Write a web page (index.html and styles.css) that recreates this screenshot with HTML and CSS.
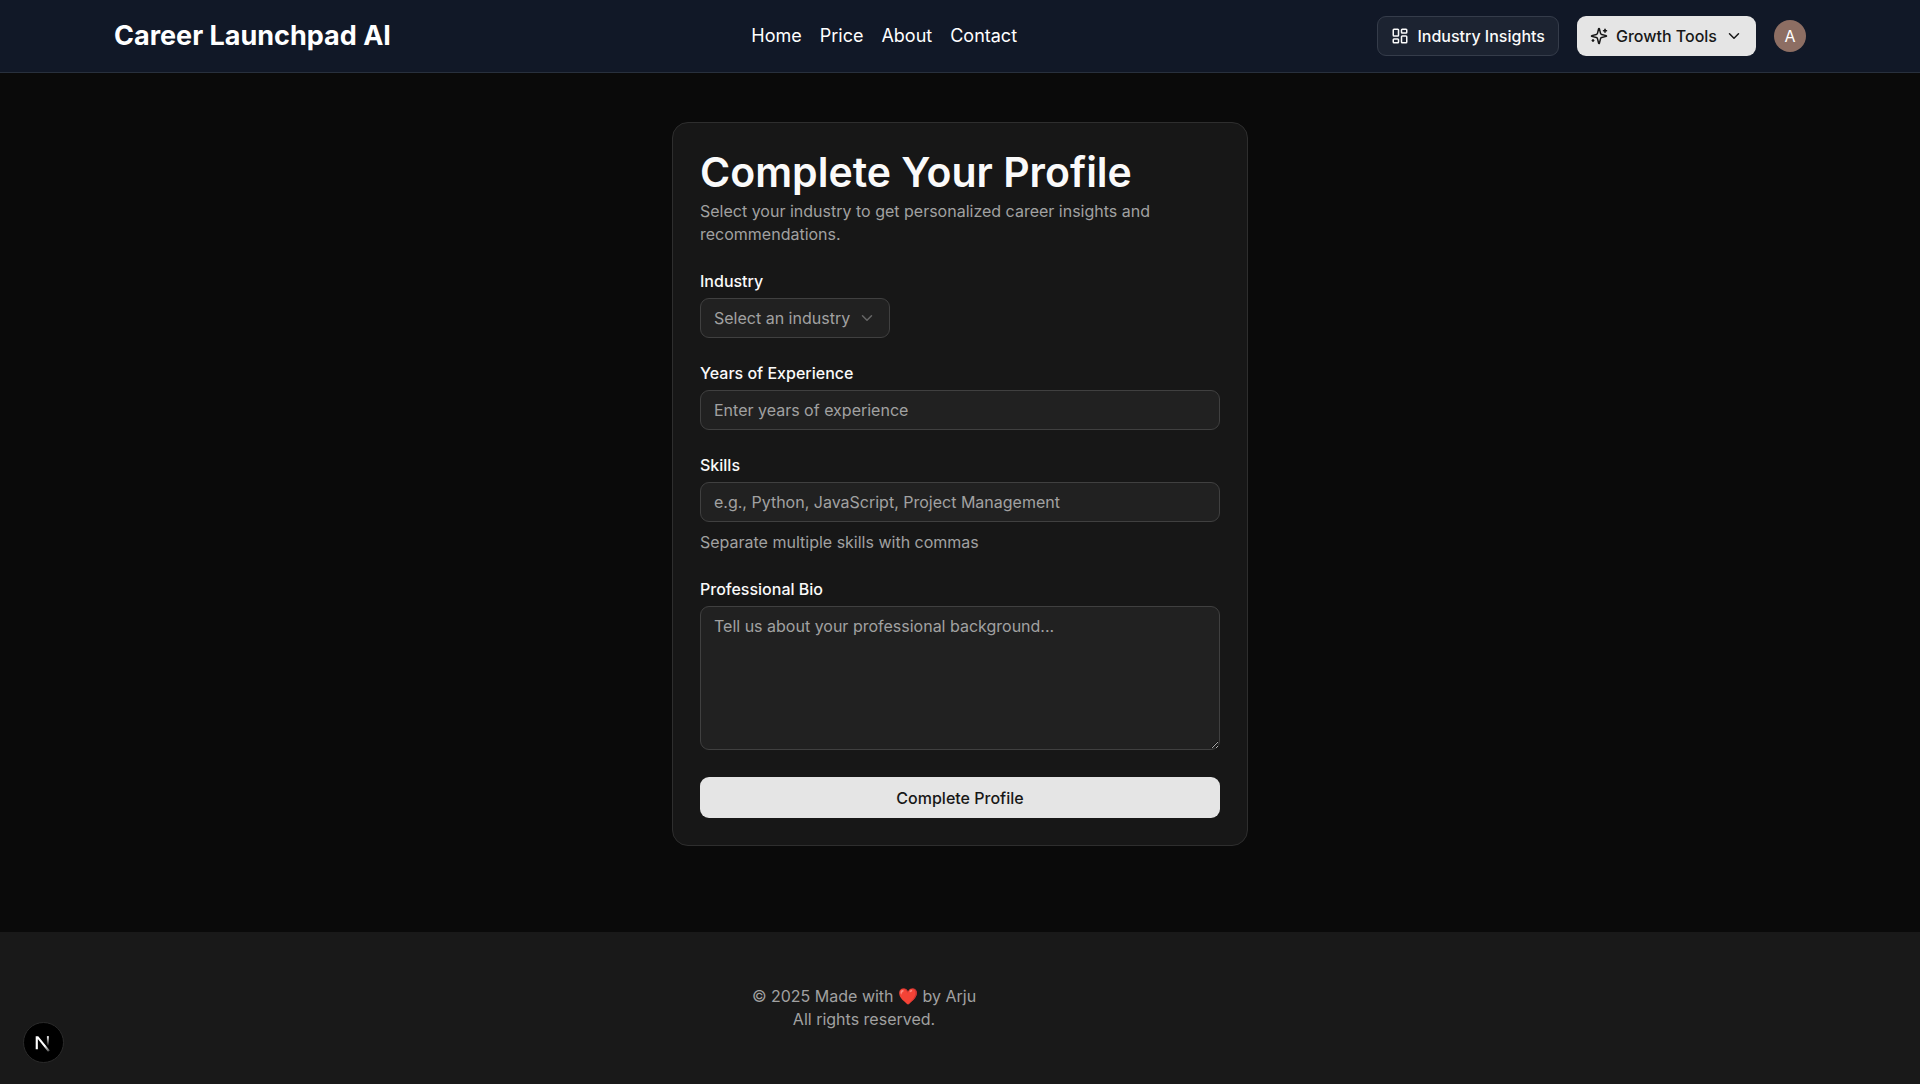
FILE: index.html
```html
<!DOCTYPE html>
<html lang="en">
<head>
<meta charset="utf-8">
<meta name="viewport" content="width=device-width, initial-scale=1">
<title>Career Launchpad AI</title>
<link rel="stylesheet" href="styles.css">
</head>
<body>
<header class="site-header">
  <div class="container header-bar">
    <a class="brand" href="#">Career Launchpad AI</a>
    <nav class="main-nav">
      <a href="#">Home</a>
      <a href="#">Price</a>
      <a href="#">About</a>
      <a href="#">Contact</a>
    </nav>
    <div class="header-actions">
      <button class="btn btn-outline" type="button">
        <svg class="icon" viewBox="0 0 24 24" aria-hidden="true"><rect width="7" height="9" x="3" y="3" rx="1"/><rect width="7" height="5" x="14" y="3" rx="1"/><rect width="7" height="9" x="14" y="12" rx="1"/><rect width="7" height="5" x="3" y="16" rx="1"/></svg>
        Industry Insights
      </button>
      <button class="btn btn-primary" type="button">
        <svg class="icon" viewBox="0 0 24 24" aria-hidden="true"><path d="M9.937 15.5A2 2 0 0 0 8.5 14.063l-6.135-1.582a.5.5 0 0 1 0-.962L8.5 9.936A2 2 0 0 0 9.937 8.5l1.582-6.135a.5.5 0 0 1 .963 0L14.063 8.5A2 2 0 0 0 15.5 9.937l6.135 1.581a.5.5 0 0 1 0 .964L15.5 14.063a2 2 0 0 0-1.437 1.437l-1.582 6.135a.5.5 0 0 1-.963 0z"/><path d="M20 3v4"/><path d="M22 5h-4"/><path d="M4 17v2"/><path d="M5 18H3"/></svg>
        Growth Tools
        <svg class="icon" viewBox="0 0 24 24" aria-hidden="true"><path d="m6 9 6 6 6-6"/></svg>
      </button>
      <button class="avatar" type="button" aria-label="Account">A</button>
    </div>
  </div>
</header>

<main class="page">
  <form class="card">
    <div class="card-header">
      <h1>Complete Your Profile</h1>
      <p>Select your industry to get personalized career insights and recommendations.</p>
    </div>
    <div class="field">
      <label for="industry">Industry</label>
      <div class="select-wrap">
        <select id="industry"><option>Select an industry</option></select>
        <svg class="icon select-arrow" viewBox="0 0 24 24" aria-hidden="true"><path d="m6 9 6 6 6-6"/></svg>
      </div>
    </div>
    <div class="field">
      <label for="experience">Years of Experience</label>
      <input id="experience" type="text" inputmode="numeric" placeholder="Enter years of experience">
    </div>
    <div class="field">
      <label for="skills">Skills</label>
      <input id="skills" type="text" placeholder="e.g., Python, JavaScript, Project Management">
      <p class="hint">Separate multiple skills with commas</p>
    </div>
    <div class="field">
      <label for="bio">Professional Bio</label>
      <textarea id="bio" placeholder="Tell us about your professional background..."></textarea>
    </div>
    <button class="btn btn-primary btn-block" type="submit">Complete Profile</button>
  </form>
</main>

<footer class="site-footer">
  <div class="footer-inner">
    <p>© 2025 Made with <span class="heart">❤️</span> by Arju</p>
    <p>All rights reserved.</p>
  </div>
</footer>

<button class="dev-badge" type="button" aria-label="Open developer tools">
  <svg viewBox="0 0 40 40" aria-hidden="true">
    <defs>
      <linearGradient id="stem" x1="0" y1="0" x2="0" y2="1"><stop offset="0" stop-color="#fff"/><stop offset="1" stop-color="#fff" stop-opacity="0"/></linearGradient>
      <linearGradient id="diag" gradientUnits="userSpaceOnUse" x1="22" y1="23" x2="28" y2="31"><stop offset="0" stop-color="#fff"/><stop offset="1" stop-color="#fff" stop-opacity="0"/></linearGradient>
    </defs>
    <path d="M12 27V13.500h2.600L26.500 28.300l-1.900 1.300L14.200 16.500V27z" fill="url(#diag)"/>
    <path d="M23.500 13.500h2v10h-2z" fill="url(#stem)"/>
  </svg>
</button>
</body>
</html>
```
FILE: styles.css
```css
*, *::before, *::after { box-sizing: border-box; }

body {
  margin: 0;
  min-height: 100vh;
  display: flex;
  flex-direction: column;
  background: #0a0a0a;
  color: #fafafa;
  font: 16px/23px Inter, "Liberation Sans", sans-serif;
}

h1, p { margin: 0; }
a { color: inherit; text-decoration: none; }
button, input, select, textarea { font: inherit; color: inherit; }

.container {
  width: 100%;
  max-width: 1728px;
  margin: 0 auto;
  padding: 0 18px;
}

.icon {
  width: 18px;
  height: 18px;
  flex: none;
  fill: none;
  stroke: currentColor;
  stroke-width: 2;
  stroke-linecap: round;
  stroke-linejoin: round;
}

/* Header */
.site-header {
  background: #111827;
  border-bottom: 1px solid #28303d;
}

.header-bar {
  display: flex;
  align-items: center;
  justify-content: space-between;
  min-height: 72px;
}

.brand {
  color: #fff;
  font-size: 27px;
  font-weight: 700;
  line-height: 36px;
}

.main-nav {
  display: flex;
  gap: 18px;
  color: #fff;
  font-size: 18px;
  line-height: 26px;
}

.header-actions {
  display: flex;
  align-items: center;
  gap: 18px;
}

.btn {
  display: inline-flex;
  align-items: center;
  justify-content: center;
  gap: 8px;
  height: 40px;
  padding: 0 13px;
  border: 1px solid transparent;
  border-radius: 9px;
  font-weight: 500;
  line-height: 22px;
  white-space: nowrap;
  cursor: pointer;
}

.btn-outline {
  background: #1c2331;
  border-color: #353c4a;
  color: #fafafa;
}

.btn-primary {
  padding: 0 12px;
  background: #e5e5e5;
  color: #171717;
}

.btn-block {
  width: 100%;
  height: 41px;
}

.avatar {
  width: 32px;
  height: 32px;
  padding: 0;
  border: 0;
  border-radius: 50%;
  background: #8d6e63;
  color: #fff;
}

/* Profile form */
.page {
  flex: 1;
  display: flex;
  justify-content: center;
  align-items: flex-start;
  padding: 49px 18px 86px;
}

.card {
  display: flex;
  flex-direction: column;
  gap: 27px;
  width: 100%;
  max-width: 576px;
  padding: 27px;
  border: 1px solid #2e2e2e;
  border-radius: 16px;
  background: #171717;
}

.card-header {
  display: flex;
  flex-direction: column;
  gap: 5px;
}

.card-header p, .hint { color: #a1a1a1; }

h1 {
  font-size: 41px;
  font-weight: 600;
  line-height: 45px;
}

.field {
  display: flex;
  flex-direction: column;
  gap: 9px;
}

.field label {
  font-weight: 500;
  line-height: 16px;
}

.field input, .field select, .field textarea {
  width: 100%;
  height: 40px;
  padding: 0 13px;
  border: 1px solid #404040;
  border-radius: 9px;
  background: #212121;
}

.field textarea {
  display: block;
  height: 144px;
  padding: 8px 13px;
  resize: vertical;
  color-scheme: dark;
}

.field ::placeholder { color: #a1a1a1; opacity: 1; }

.select-wrap {
  position: relative;
  align-self: flex-start;
}

.field select {
  appearance: none;
  padding-right: 38px;
  color: #a1a1a1;
}

.select-arrow {
  position: absolute;
  top: 11px;
  right: 14px;
  color: #666;
  pointer-events: none;
}

/* Footer */
.site-footer {
  padding: 53px 0;
  background: #191919;
  color: #a1a1a1;
}

.footer-inner {
  max-width: 1728px;
  padding: 0 18px;
  text-align: center;
}

.heart { font-family: "Noto Color Emoji", sans-serif; }

.dev-badge {
  position: fixed;
  left: 23px;
  bottom: 21px;
  width: 41px;
  height: 41px;
  padding: 0;
  border: 1px solid #2b2b2b;
  border-radius: 50%;
  background: #000;
}

.dev-badge svg { display: block; width: 100%; }
```
